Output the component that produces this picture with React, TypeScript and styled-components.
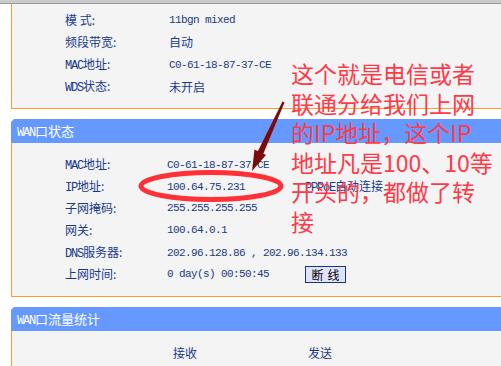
import React from 'react'
import styled, { createGlobalStyle } from 'styled-components'

const GlobalStyle = createGlobalStyle`
  html, body {
    margin: 0;
    padding: 0;
    background: #ffffff;
    overflow: hidden;
  }
`

const Page = styled.div`
  position: relative;
  width: 501px;
  height: 366px;
  overflow: hidden;
  background: #ffffff;
  font-family: "Noto Sans CJK SC", "Liberation Sans", sans-serif;
`

const TopStrip = styled.div`
  height: 3px;
  background: #cbcbcb;
  border-bottom: 1px solid #9a9a9a;
`

const Panel = styled.div<{ $top?: number; $bottom?: number }>`
  margin-left: 11px;
  width: 520px;
  background: #f4f4f4;
  border-left: 1px solid #ff9a33;
  border-bottom: 1px solid #ff9a33;
  padding-top: ${({ $top }) => $top ?? 10}px;
  padding-bottom: ${({ $bottom }) => $bottom ?? 11}px;
`

const PanelHeader = styled.div`
  margin: 10px 0 0 11px;
  width: 520px;
  height: 24px;
  background: #6699ff;
  color: #ffffff;
  font-size: 13px;
  line-height: 24px;
  padding-left: 6px;
  box-sizing: border-box;
  clip-path: polygon(0 3px, 3px 0, 100% 0, 100% 100%, 0 100%);
`

// SimSun-like half width latin: 6px advance, taller glyphs
const Ascii = styled.span<{ $size?: number }>`
  font-family: "Liberation Mono", "DejaVu Sans Mono", monospace;
  font-size: ${({ $size }) => $size ?? 12}px;
  letter-spacing: ${({ $size }) => 6 - (($size ?? 12) * 0.6)}px;
`

const Row = styled.div<{ $valueCol: number }>`
  display: grid;
  grid-template-columns: ${({ $valueCol }) => `${$valueCol}px 138px auto`};
  align-items: center;
  height: 22px;
  padding-left: 53px;
  color: #173a8e;
  white-space: nowrap;
`

const Label = styled.span`
  font-size: 12px;
  line-height: 22px;
`

const Value = styled.span<{ $cjk?: boolean }>`
  font-family: ${({ $cjk }) =>
    $cjk ? '"Noto Sans CJK SC", sans-serif' : '"Liberation Mono", "DejaVu Sans Mono", monospace'};
  font-size: ${({ $cjk }) => ($cjk ? 12 : 11)}px;
  letter-spacing: ${({ $cjk }) => ($cjk ? 0 : -0.6)}px;
  line-height: 22px;
`

const Extra = styled.span`
  font-size: 12px;
  line-height: 22px;
  color: #173a8e;
`

const DisconnectButton = styled.button`
  width: 41px;
  height: 17px;
  padding: 0;
  border: 1px solid #1b3480;
  background: #e0e1fa;
  color: #000000;
  font-family: "Noto Sans CJK SC", sans-serif;
  font-size: 12px;
  line-height: 15px;
  letter-spacing: 4px;
  text-indent: 4px;
`

const StatsRow = styled.div`
  display: flex;
  height: 22px;
  align-items: center;
  padding-left: 161px;
  color: #173a8e;
  font-size: 12px;
`

const StatsCell = styled.span`
  width: 135px;
`

const Note = styled.div`
  position: absolute;
  left: 291px;
  top: 59px;
  color: #ff3a48;
  font-size: 23px;
  line-height: 29.5px;
  white-space: nowrap;
`

const Marks = styled.svg`
  position: absolute;
  left: 0;
  top: 0;
  pointer-events: none;
`

type Item = { label: React.ReactNode; value: React.ReactNode; cjk?: boolean; extra?: React.ReactNode }

const wirelessItems: Item[] = [
  { label: '模 式:', value: '11bgn mixed' },
  { label: '频段带宽:', value: '自动', cjk: true },
  { label: <><Ascii>MAC</Ascii>地址:</>, value: 'C0-61-18-87-37-CE' },
  { label: <><Ascii>WDS</Ascii>状态:</>, value: '未开启', cjk: true },
]

const wanItems: Item[] = [
  { label: <><Ascii>MAC</Ascii>地址:</>, value: 'C0-61-18-87-37-CE' },
  {
    label: <><Ascii>IP</Ascii>地址:</>,
    value: '100.64.75.231',
    extra: <Extra><Ascii>PPPoE</Ascii>自动连接</Extra>,
  },
  { label: '子网掩码:', value: '255.255.255.255' },
  { label: '网关:', value: '100.64.0.1' },
  { label: <><Ascii>DNS</Ascii>服务器:</>, value: '202.96.128.86 , 202.96.134.133' },
  { label: '上网时间:', value: '0 day(s) 00:50:45', extra: <DisconnectButton>断线</DisconnectButton> },
]

const noteLines = [
  '这个就是电信或者',
  '联通分给我们上网',
  '的IP地址，这个IP',
  '地址凡是100、10等',
  '开头的，都做了转',
  '接',
]

const InfoRows = ({ items, valueCol }: { items: Item[]; valueCol: number }) => (
  <>
    {items.map((item, i) => (
      <Row key={i} $valueCol={valueCol}>
        <Label>{item.label}</Label>
        <Value $cjk={item.cjk}>{item.value}</Value>
        {item.extra}
      </Row>
    ))}
  </>
)

export default function App() {
  return (
    <Page>
      <GlobalStyle />
      <TopStrip />

      {/* wireless status (cut off at top) */}
      <Panel $top={5} $bottom={11}>
        <InfoRows items={wirelessItems} valueCol={104} />
      </Panel>

      <PanelHeader>
        <Ascii $size={12}>WAN</Ascii>口状态
      </PanelHeader>
      <Panel $top={10} $bottom={11}>
        <InfoRows items={wanItems} valueCol={102} />
      </Panel>

      <PanelHeader>
        <Ascii $size={12}>WAN</Ascii>口流量统计
      </PanelHeader>
      <Panel $top={10} $bottom={40}>
        <StatsRow>
          <StatsCell>接收</StatsCell>
          <StatsCell>发送</StatsCell>
        </StatsRow>
      </Panel>

      {/* hand-drawn annotation */}
      <Marks width="501" height="366" viewBox="0 0 501 366">
        <ellipse cx="211" cy="186" rx="70" ry="13.5" fill="none" stroke="#ff3036" strokeWidth="5" />
        <polygon points="282.5,101.5 284.5,102.5 263,154.5 257.5,152" fill="#7d0a0a" />
        <polygon points="252,171 254.5,149.5 266,155" fill="#7d0a0a" />
      </Marks>
      <Note>
        {noteLines.map((line) => (
          <div key={line}>{line}</div>
        ))}
      </Note>
    </Page>
  )
}
